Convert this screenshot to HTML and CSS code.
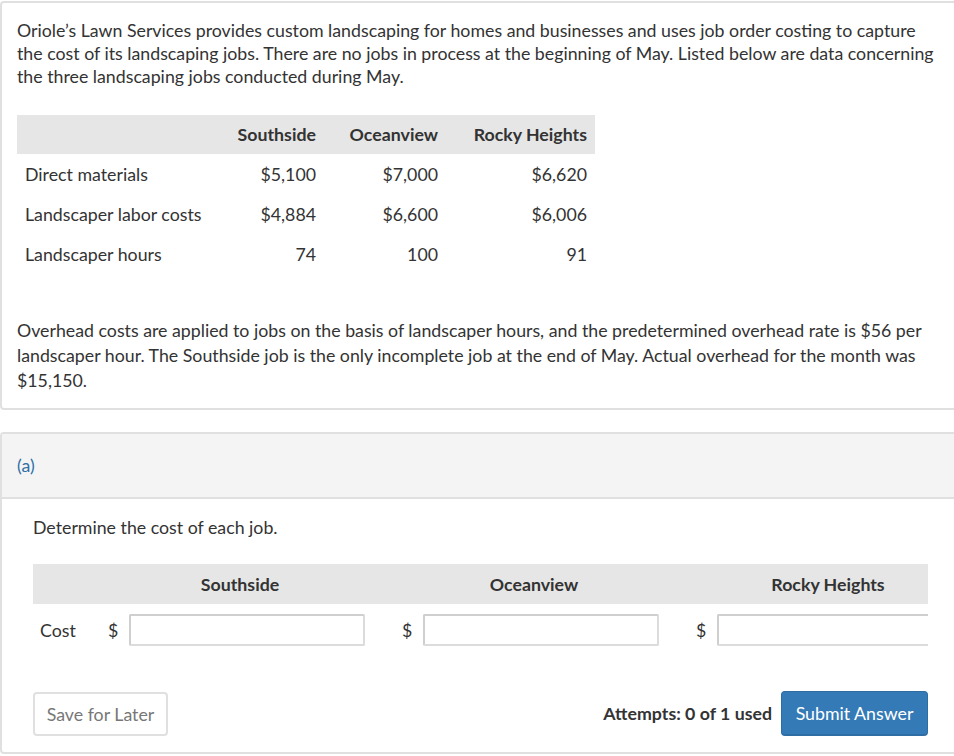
FILE: index.html
```html
<!DOCTYPE html>
<html lang="en">
<head>
<meta charset="utf-8">
<title>Oriole's Lawn Services</title>
<link rel="stylesheet" href="styles.css">
</head>
<body>
<div class="page">
  <section class="card intro">
    <p class="text">Oriole’s Lawn Services provides custom landscaping for homes and businesses and uses job order costing to capture the cost of its landscaping jobs. There are no jobs in process at the beginning of May. Listed below are data concerning the three landscaping jobs conducted during May.</p>
    <table class="data">
      <colgroup><col class="c1"><col class="c2"><col class="c3"><col class="c4"></colgroup>
      <thead>
        <tr><th></th><th>Southside</th><th>Oceanview</th><th>Rocky Heights</th></tr>
      </thead>
      <tbody>
        <tr><td class="lbl">Direct materials</td><td>$5,100</td><td>$7,000</td><td>$6,620</td></tr>
        <tr><td class="lbl">Landscaper labor costs</td><td>$4,884</td><td>$6,600</td><td>$6,006</td></tr>
        <tr><td class="lbl">Landscaper hours</td><td>74</td><td>100</td><td>91</td></tr>
      </tbody>
    </table>
    <p class="text second">Overhead costs are applied to jobs on the basis of landscaper hours, and the predetermined overhead rate is $56 per landscaper hour. The Southside job is the only incomplete job at the end of May. Actual overhead for the month was $15,150.</p>
  </section>

  <section class="card part">
    <div class="part-head"><span class="part-label">(a)</span></div>
    <div class="part-body">
      <p class="text">Determine the cost of each job.</p>
      <div class="answer-wrap">
        <table class="answer">
          <colgroup><col class="a1"><col class="a2"><col class="a2"><col class="a2"></colgroup>
          <thead>
            <tr><th></th><th>Southside</th><th>Oceanview</th><th>Rocky Heights</th></tr>
          </thead>
          <tbody>
            <tr>
              <td class="cost">Cost</td>
              <td><div class="field"><span class="cur">$</span><input type="text" class="inp"></div></td>
              <td><div class="field"><span class="cur">$</span><input type="text" class="inp"></div></td>
              <td><div class="field"><span class="cur">$</span><input type="text" class="inp"></div></td>
            </tr>
          </tbody>
        </table>
      </div>
      <div class="actions">
        <button class="btn save">Save for Later</button>
        <div class="submit-group">
          <span class="attempts">Attempts: 0 of 1 used</span>
          <button class="btn submit">Submit Answer</button>
        </div>
      </div>
    </div>
  </section>
</div>
</body>
</html>
```

FILE: styles.css
```css
html, body {
  margin: 0;
  padding: 0;
  background: #fff;
  overflow: hidden;
}
body {
  font-family: Lato, "Open Sans", "Liberation Sans", sans-serif;
  font-size: 17.75px;
  line-height: 23px;
  color: #333;
}
.page {
  width: 961px;
  padding-top: 1px;
}
.card {
  border: 2px solid #e0e0e0;
  border-radius: 4px;
  background: #fff;
}
.intro {
  padding: 16px 15px 15px 15px;
}
.text {
  margin: 0;
}
.data {
  border-collapse: collapse;
  table-layout: fixed;
  width: 578px;
  margin-top: 27px;
}
.data .c1 { width: 203px; }
.data .c2 { width: 104px; }
.data .c3 { width: 122px; }
.data .c4 { width: 149px; }
.data th {
  background: #e6e6e6;
  height: 39px;
  padding: 0 8px;
  text-align: right;
  font-weight: 700;
  white-space: nowrap;
}
.data td {
  height: 40px;
  padding: 0 8px;
  text-align: right;
  white-space: nowrap;
}
.data td.lbl {
  text-align: left;
}
.second {
  margin-top: 44px;
  line-height: 25px;
}
.part {
  margin-top: 22px;
}
.part-head {
  background: #f4f4f4;
  border-bottom: 2px solid #e0e0e0;
  padding: 20px 15px;
}
.part-label {
  color: #2f6fa6;
}
.part-body {
  padding: 17px 31px 16px 31px;
}
.answer-wrap {
  margin-top: 25px;
  overflow: hidden;
  width: 895px;
}
.answer {
  border-collapse: collapse;
  table-layout: fixed;
  width: 949px;
}
.answer .a1 { width: 67px; }
.answer .a2 { width: 294px; }
.answer th {
  background: #e6e6e6;
  height: 40px;
  padding: 0 14px 0 0;
  text-align: center;
  font-weight: 700;
  white-space: nowrap;
}
.answer th:first-child {
  padding: 0;
}
.answer td {
  height: 52px;
  padding: 0 0 0 8px;
  vertical-align: middle;
}
.answer td.cost {
  padding-left: 7px;
}
.field {
  display: flex;
  align-items: center;
}
.cur {
  width: 10px;
  margin-right: 11px;
  text-align: center;
}
.inp {
  box-sizing: border-box;
  width: 236px;
  height: 32px;
  flex: none;
  border: 2px solid #dcdcdc;
  border-top-color: #cfcfcf;
  border-left-color: #cfcfcf;
  border-radius: 2px;
  background: #fff;
  font: inherit;
  padding: 0 6px;
}
.actions {
  margin-top: 35px;
  display: flex;
  justify-content: space-between;
  align-items: center;
}
.btn {
  font-family: inherit;
  font-size: 17.75px;
  border-radius: 4px;
  box-sizing: border-box;
  cursor: pointer;
  padding: 0;
}
.save {
  width: 135px;
  height: 44px;
  background: #fff;
  color: #777;
  border: 2px solid #e0e0e0;
}
.submit-group {
  display: flex;
  align-items: center;
  gap: 9px;
}
.attempts {
  font-weight: 700;
  color: #333;
}
.submit {
  width: 147px;
  height: 45px;
  background: #337ab7;
  color: #fff;
  border: 1px solid #2e6da4;
  border-bottom-width: 2px;
}
```
